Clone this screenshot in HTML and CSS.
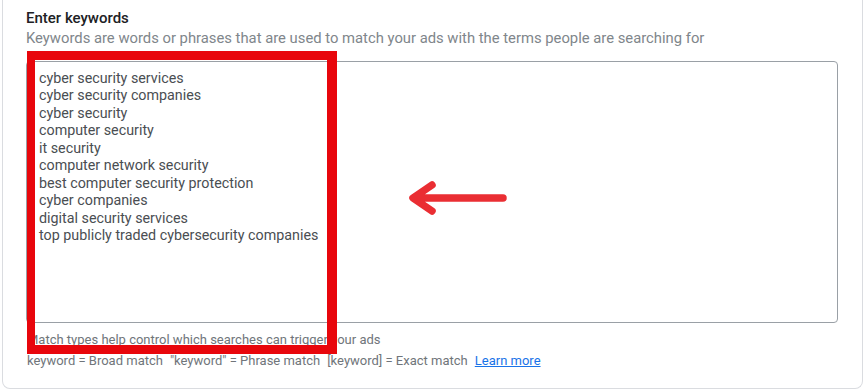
FILE: index.html
```html
<!DOCTYPE html>
<html lang="en">
<head>
<meta charset="utf-8">
<title>Enter keywords</title>
<link rel="stylesheet" href="styles.css">
</head>
<body>
<section class="card">
  <h2 class="title">Enter keywords</h2>
  <p class="subtitle">Keywords are words or phrases that are used to match your ads with the terms people are searching for</p>
  <div class="keywords">
    <div class="kw">cyber security services</div>
    <div class="kw">cyber security companies</div>
    <div class="kw">cyber security</div>
    <div class="kw">computer security</div>
    <div class="kw">it security</div>
    <div class="kw">computer network security</div>
    <div class="kw">best computer security protection</div>
    <div class="kw">cyber companies</div>
    <div class="kw">digital security services</div>
    <div class="kw">top publicly traded cybersecurity companies</div>
  </div>
  <div class="help">
    <p class="help-line">Match types help control which searches can trigger your ads</p>
    <p class="help-line">
      <span class="mt">keyword = Broad match</span>
      <span class="mt">"keyword" = Phrase match</span>
      <span class="mt">[keyword] = Exact match</span>
      <a class="learn" href="#">Learn more</a>
    </p>
  </div>
  <div class="highlight"></div>
  <svg class="arrow" width="110" height="40" viewBox="0 0 110 40">
    <path d="M97 20 H8 M26 7 L7 20 L26 33" fill="none" stroke="#ea2e33" stroke-width="7.5" stroke-linecap="round" stroke-linejoin="round"/>
  </svg>
</section>
</body>
</html>
```

FILE: styles.css
```css
html, body {
  margin: 0;
  padding: 0;
  background: #ffffff;
}

body {
  padding: 0 1px 1px 2px;
  font-family: Roboto, "Liberation Sans", Arial, sans-serif;
}

.card {
  position: relative;
  box-sizing: border-box;
  width: 861px;
  border: 1px solid #dadce0;
  border-top: none;
  border-radius: 0 0 8px 8px;
  padding: 8px 24px 18px 23px;
  background: #fff;
}

.title {
  margin: 0;
  font-size: 15px;
  line-height: 20px;
  font-weight: 500;
  color: #202124;
}

.subtitle {
  margin: 0;
  font-size: 14.8px;
  line-height: 20px;
  color: #80868b;
}

.keywords {
  margin-top: 13px;
  border: 1px solid #9aa0a6;
  border-radius: 4px;
  padding: 8px 12px 0 12px;
  box-sizing: border-box;
  height: 262px;
}

.kw {
  font-size: 14.3px;
  line-height: 17.45px;
  color: #4a4e52;
  white-space: nowrap;
}

.help {
  margin-top: 8px;
  display: flex;
  flex-direction: column;
  gap: 3px;
  padding-left: 1px;
}

.help-line {
  margin: 0;
  font-size: 13px;
  line-height: 18px;
  color: #70757a;
  display: flex;
  gap: 7px;
}

.learn {
  color: #1a73e8;
  text-decoration: underline;
}

.highlight {
  position: absolute;
  left: 24px;
  top: 51px;
  width: 310px;
  height: 303px;
  box-sizing: border-box;
  border: 9px solid #e8060c;
  border-left-width: 8px;
  border-right-width: 10px;
}

.arrow {
  position: absolute;
  left: 403px;
  top: 178px;
}
```
